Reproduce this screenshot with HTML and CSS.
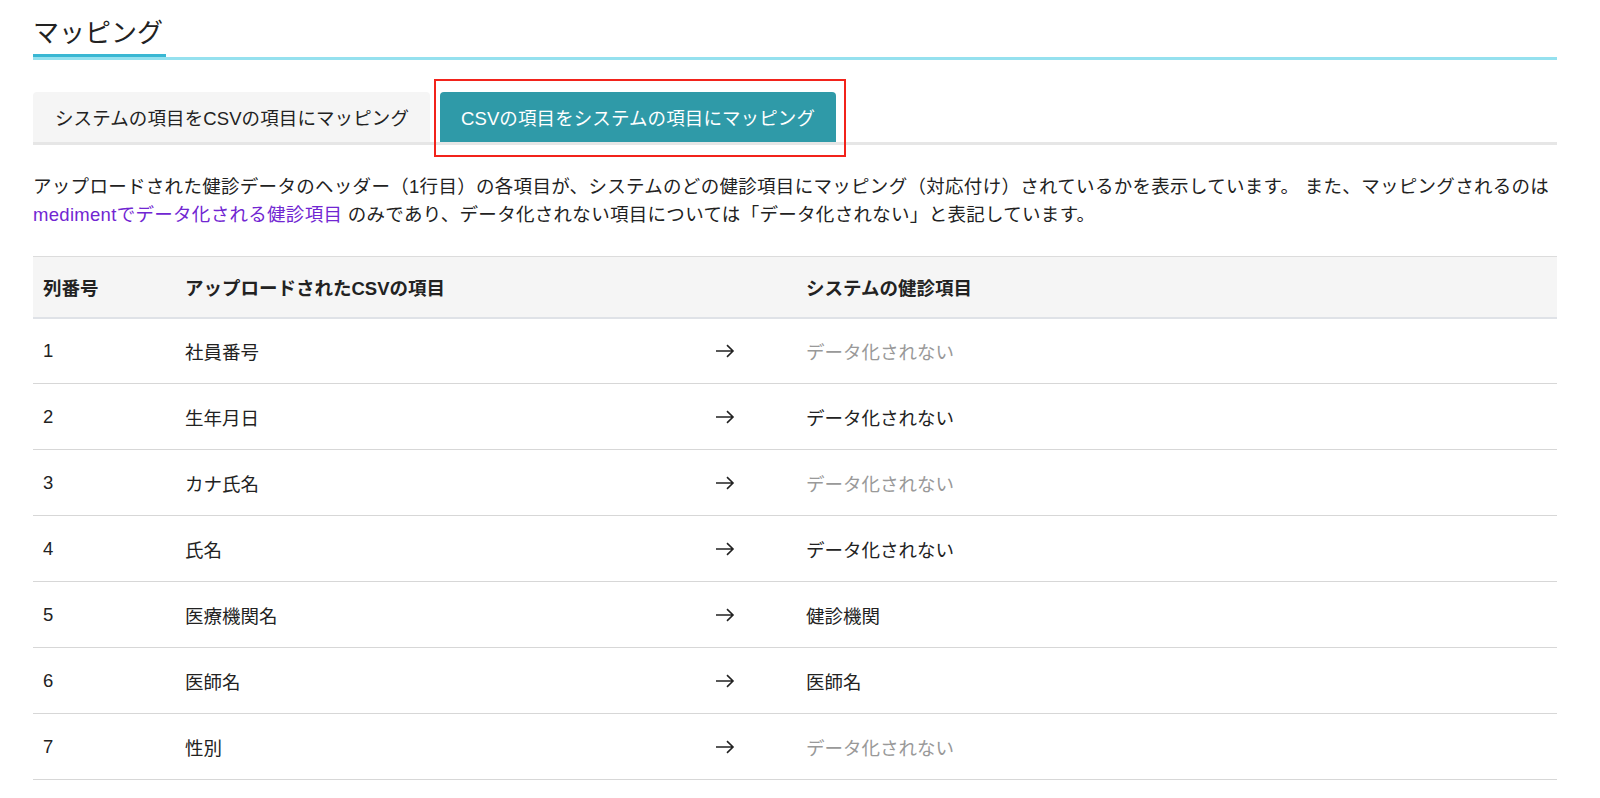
FILE: index.html
```html
<!DOCTYPE html>
<html lang="ja">
<head>
<meta charset="utf-8">
<title>マッピング</title>
<link rel="stylesheet" href="styles.css">
</head>
<body>
<main class="page">
  <div class="page-title"><h1 class="title">マッピング</h1></div>

  <nav class="tabs">
    <div class="tab">システムの項目をCSVの項目にマッピング</div>
    <div class="tab tab-active">CSVの項目をシステムの項目にマッピング<span class="annot"></span></div>
  </nav>

  <p class="desc">アップロードされた健診データのヘッダー（1行目）の各項目が、システムのどの健診項目にマッピング（対応付け）されているかを表示しています。 また、マッピングされるのは <a class="link" href="#">medimentでデータ化される健診項目</a> のみであり、データ化されない項目については「データ化されない」と表記しています。</p>

  <table class="map">
    <thead>
      <tr>
        <th class="c-no">列番号</th>
        <th class="c-csv">アップロードされたCSVの項目</th>
        <th class="c-arrow"></th>
        <th class="c-sys">システムの健診項目</th>
      </tr>
    </thead>
    <tbody>
      <tr><td>1</td><td>社員番号</td><td class="arrow"><svg width="20" height="14" viewBox="0 0 20 14"><path d="M1 7H18M12 1.2L18 7L12 12.8" fill="none" stroke="#222" stroke-width="1.6"/></svg></td><td class="muted">データ化されない</td></tr>
      <tr><td>2</td><td>生年月日</td><td class="arrow"><svg width="20" height="14" viewBox="0 0 20 14"><path d="M1 7H18M12 1.2L18 7L12 12.8" fill="none" stroke="#222" stroke-width="1.6"/></svg></td><td>データ化されない</td></tr>
      <tr><td>3</td><td>カナ氏名</td><td class="arrow"><svg width="20" height="14" viewBox="0 0 20 14"><path d="M1 7H18M12 1.2L18 7L12 12.8" fill="none" stroke="#222" stroke-width="1.6"/></svg></td><td class="muted">データ化されない</td></tr>
      <tr><td>4</td><td>氏名</td><td class="arrow"><svg width="20" height="14" viewBox="0 0 20 14"><path d="M1 7H18M12 1.2L18 7L12 12.8" fill="none" stroke="#222" stroke-width="1.6"/></svg></td><td>データ化されない</td></tr>
      <tr><td>5</td><td>医療機関名</td><td class="arrow"><svg width="20" height="14" viewBox="0 0 20 14"><path d="M1 7H18M12 1.2L18 7L12 12.8" fill="none" stroke="#222" stroke-width="1.6"/></svg></td><td>健診機関</td></tr>
      <tr><td>6</td><td>医師名</td><td class="arrow"><svg width="20" height="14" viewBox="0 0 20 14"><path d="M1 7H18M12 1.2L18 7L12 12.8" fill="none" stroke="#222" stroke-width="1.6"/></svg></td><td>医師名</td></tr>
      <tr><td>7</td><td>性別</td><td class="arrow"><svg width="20" height="14" viewBox="0 0 20 14"><path d="M1 7H18M12 1.2L18 7L12 12.8" fill="none" stroke="#222" stroke-width="1.6"/></svg></td><td class="muted">データ化されない</td></tr>
    </tbody>
  </table>
</main>
</body>
</html>
```
FILE: styles.css
```css
html, body {
  margin: 0;
  padding: 0;
  background: #fff;
}
body {
  font-family: "Liberation Sans", "Noto Sans CJK JP", sans-serif;
  color: #222;
  font-size: 18.5px;
}
.page {
  width: 1524px;
  margin-left: 33px;
  padding-top: 15px;
}
.page-title {
  border-bottom: 3px solid #95e1ef;
  height: 42px;
}
.title {
  display: inline-block;
  margin: 0;
  font-size: 26px;
  font-weight: normal;
  line-height: 36px;
  height: 42px;
  box-sizing: border-box;
  border-bottom: 3px solid #39b7d3;
  padding-right: 3px;
}
.tabs {
  display: flex;
  gap: 10px;
  margin-top: 32px;
  height: 50px;
  border-bottom: 3px solid #e6e6e6;
}
.tab {
  position: relative;
  display: flex;
  align-items: center;
  padding: 0 21px 0 22px;
  background: #f5f5f5;
  border-radius: 4px 4px 0 0;
  letter-spacing: 0.1px;
  white-space: nowrap;
}
.tab-active {
  background: #2f9aa8;
  color: #fff;
  padding: 0 21px 0 21px;
}
.annot {
  position: absolute;
  left: -6px;
  top: -13px;
  right: -10px;
  bottom: -15px;
  border: 2.5px solid #f2231b;
  pointer-events: none;
}
.desc {
  margin: 28px 0 0;
  line-height: 28px;
  letter-spacing: 0.3px;
}
.link {
  color: #7126d2;
  text-decoration: none;
}
.map {
  width: 100%;
  margin-top: 27px;
  border-collapse: collapse;
}
.map th, .map td {
  text-align: left;
  padding: 0 0 0 10px;
  vertical-align: middle;
}
.map thead tr {
  background: #f5f5f5;
  border-top: 1px solid #dcdcdc;
  border-bottom: 2px solid #dfe2e7;
  height: 61px;
}
.map th {
  font-weight: bold;
}
.map tbody tr {
  height: 66px;
  border-bottom: 1px solid #d7d7d7;
}
.c-no { width: 132px; }
.c-csv { width: 519px; }
.c-arrow { width: 82px; }
.arrow svg {
  display: block;
  margin-left: 1px;
}
.muted {
  color: #999;
}
```
